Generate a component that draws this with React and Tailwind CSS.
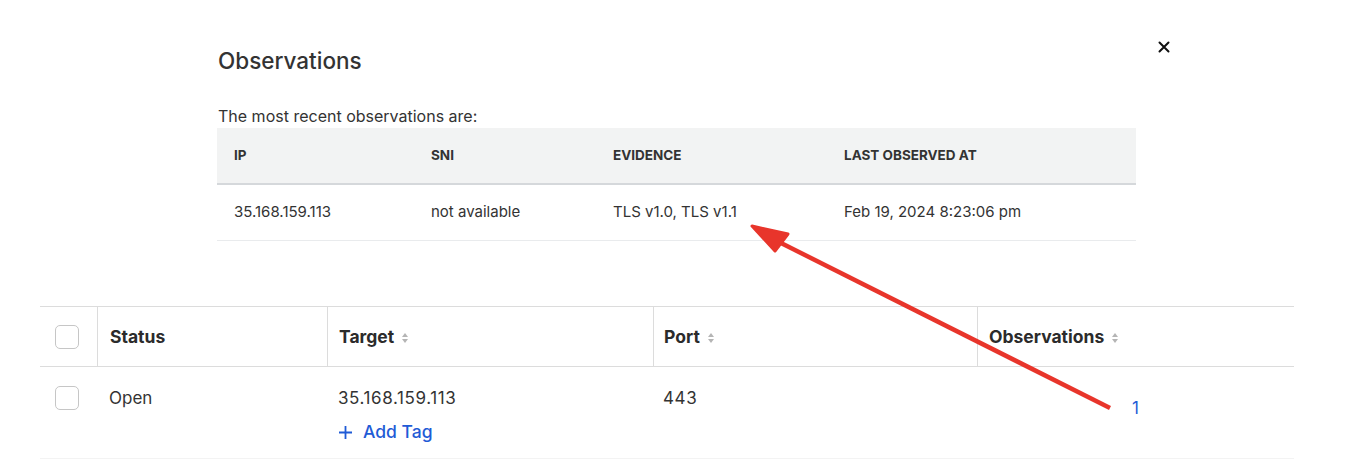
import React from "react";

const SortIcon = () => (
  <svg width="8" height="12" viewBox="0 0 8 12" className="ml-[7px] inline-block">
    <path d="M4 1 L7 5 L1 5 Z" fill="#b5b5b5" />
    <path d="M4 11 L7 7 L1 7 Z" fill="#b5b5b5" />
  </svg>
);

const Checkbox = () => (
  <div className="w-[24px] h-[24px] rounded-[5px] border border-[#c6c6c6] bg-white" />
);

export default function App() {
  return (
    <div
      className="relative w-[1346px] h-[474px] bg-white overflow-hidden text-[#2f2f2f]"
      style={{ fontFamily: "Inter, 'Noto Sans', sans-serif" }}
    >
      {/* Modal section */}
      <div className="pl-[218px] pt-[40px] w-[1170px]">
        <div className="flex justify-between items-start">
          <h2 className="mt-[6px] text-[22.5px] leading-[30px] font-medium text-[#333]">Observations</h2>
          <svg width="12" height="12" viewBox="0 0 12 12" className="mt-[1px]">
            <path d="M1.5 1.5 L10.5 10.5 M10.5 1.5 L1.5 10.5" stroke="#111" strokeWidth="2" strokeLinecap="round" />
          </svg>
        </div>
        <p className="mt-[30px] text-[16px] leading-[21px] text-[#333]">The most recent observations are:</p>
        <div className="mt-[1px] w-[919px] -ml-[1px]">
          <div className="grid grid-cols-[197px_182px_231px_309px] h-[57px] items-center bg-[#f2f3f3] border-b-2 border-[#d5d8db] text-[13.5px] font-bold text-[#333]">
            <div className="pl-[17px]">IP</div>
            <div className="pl-[17px]">SNI</div>
            <div className="pl-[17px]">EVIDENCE</div>
            <div className="pl-[17px]">LAST OBSERVED AT</div>
          </div>
          <div className="grid grid-cols-[197px_182px_231px_309px] h-[56px] items-center border-b border-[#e9ebed] text-[15px] text-[#333]">
            <div className="pl-[17px]">35.168.159.113</div>
            <div className="pl-[17px]">not available</div>
            <div className="pl-[17px]">TLS v1.0, TLS v1.1</div>
            <div className="pl-[17px]">Feb 19, 2024 8:23:06 pm</div>
          </div>
        </div>
      </div>

      {/* Main table */}
      <div className="mt-[65px] ml-[40px] w-[1254px]">
        <div className="grid grid-cols-[57px_230px_326px_324px_317px] h-[61px] border-t border-b border-[#dcdcdc] text-[17.5px] font-bold text-[#2b2b2b]">
          <div className="flex items-center pl-[15px]">
            <Checkbox />
          </div>
          <div className="flex items-center pl-[12px] pt-[2px] border-l border-[#dcdcdc]">Status</div>
          <div className="flex items-center pl-[11px] pt-[2px] border-l border-[#dcdcdc]">
            Target <SortIcon />
          </div>
          <div className="flex items-center pl-[10px] pt-[2px] border-l border-[#dcdcdc]">
            Port <SortIcon />
          </div>
          <div className="flex items-center pl-[11px] pt-[2px] border-l border-[#dcdcdc]">
            Observations <SortIcon />
          </div>
        </div>
        <div className="grid grid-cols-[57px_230px_326px_324px_317px] h-[92px] border-b border-[#f3f3f3] text-[17px] text-[#333]">
          <div className="pl-[15px] pt-[19px]">
            <Checkbox />
          </div>
          <div className="pl-[12px] pt-[18px] leading-[26px]">Open</div>
          <div className="pl-[11px] pt-[18px] leading-[26px]">
            <div className="tracking-[0.6px]">35.168.159.113</div>
            <div className="mt-[8px] flex items-center text-[#1f5bd6] font-medium text-[17.5px]">
              <svg width="15" height="15" viewBox="0 0 15 15" className="mr-[10px]">
                <path d="M7.5 1 V14 M1 7.5 H14" stroke="#1f5bd6" strokeWidth="1.8" />
              </svg>
              Add Tag
            </div>
          </div>
          <div className="pl-[10px] pt-[18px] leading-[26px] tracking-[0.6px]">443</div>
          <div className="flex items-center justify-center pb-[8px] text-[#1f5bd6]">1</div>
        </div>
      </div>

      {/* Red annotation arrow */}
      <svg className="absolute left-0 top-0 pointer-events-none" width="1346" height="474">
        <line x1="1110" y1="408" x2="775" y2="240" stroke="#e8352b" strokeWidth="4.5" />
        <path d="M752 226 L788 234 L775 251 Z" fill="#e8352b" stroke="#e8352b" strokeWidth="3" strokeLinejoin="round" />
      </svg>
    </div>
  );
}
